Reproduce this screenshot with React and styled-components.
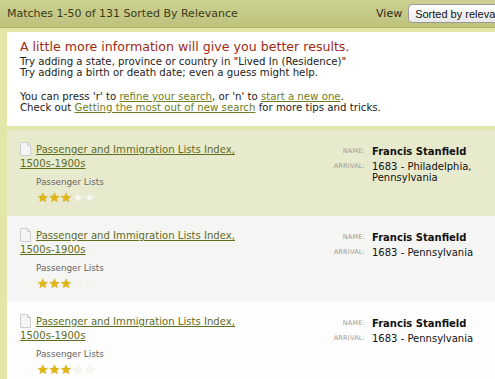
import styled, { createGlobalStyle } from "styled-components";

const GlobalStyle = createGlobalStyle`
  html, body { margin: 0; padding: 0; background: #fff; }
  body { font-family: "DejaVu Sans", Verdana, sans-serif; overflow: hidden; }
`;

const Page = styled.div`
  width: 495px;
  height: 379px;
  overflow: hidden;
  background: #e2e7a8;
`;

const Header = styled.div`
  height: 28px;
  display: flex;
  align-items: center;
  justify-content: space-between;
  padding-left: 7px;
  background: linear-gradient(#cdd192, #bec27c);
  border-bottom: 1px solid #aeb36a;
  box-sizing: border-box;
`;

const HeaderTitle = styled.div`
  font-size: 11px;
  color: #3a3a20;
  white-space: nowrap;
`;

const ViewBox = styled.div`
  display: flex;
  align-items: center;
  gap: 6px;
  font-size: 11px;
  color: #2a2a1a;
  margin-right: -25px;
`;

const SelectButton = styled.div`
  height: 17px;
  padding: 0 6px;
  display: flex;
  align-items: center;
  border: 1px solid #9a9a9a;
  border-radius: 4px;
  background: linear-gradient(#ffffff, #e8e8e8);
  font-family: "Liberation Sans", Arial, sans-serif;
  font-size: 11px;
  color: #111;
  white-space: nowrap;
`;

const Body = styled.div`
  padding: 4px 0 0 7px;
`;

const InfoBox = styled.div`
  background: #fff;
  padding: 7px 0 13px 13px;
  margin-bottom: 4px;
`;

const InfoTitle = styled.div`
  font-size: 12.6px;
  line-height: 15px;
  color: #9c2c14;
  margin-bottom: 2px;
`;

const InfoLine = styled.div`
  font-size: 10.2px;
  line-height: 11px;
  color: #222;
  white-space: nowrap;
  margin-top: ${(p) => (p.gap ? "13px" : "0")};
`;

const InfoLink = styled.a`
  color: #6e7d22;
  text-decoration: underline;
`;

const Row = styled.div`
  display: flex;
  justify-content: space-between;
  height: ${(p) => p.h}px;
  padding: 12px 13px 0 13px;
  box-sizing: border-box;
  background: ${(p) => p.bg};
`;

const Left = styled.div`
  width: 230px;
`;

const TitleBlock = styled.div`
  font-size: 10.1px;
  line-height: 14px;
`;

const TitleLink = styled.a`
  color: #5f6d1d;
  text-decoration: underline;
`;

const DocIcon = styled.svg`
  vertical-align: -3px;
  margin-right: 5px;
`;

const Category = styled.div`
  font-size: 8.8px;
  line-height: 11px;
  color: #666;
  margin: 6px 0 3px 16px;
`;

const Stars = styled.div`
  display: flex;
  margin-left: 17px;
  font-size: 13px;
  line-height: 13px;
`;

const Star = styled.span`
  color: ${(p) => (p.on ? "#e0b514" : "#f7f7f2")};
  text-shadow: ${(p) => (p.on ? "0 0 1px #c79a00" : "0 0 1px #e0e0d8")};
`;

const Right = styled.div`
  display: grid;
  grid-template-columns: auto 110px;
  column-gap: 7px;
  align-content: start;
  row-gap: 4px;
  padding-top: 4px;
`;

const Label = styled.div`
  font-size: 6.5px;
  line-height: 11px;
  color: #9a9a9a;
  text-align: right;
  letter-spacing: 0.2px;
`;

const Value = styled.div`
  font-size: 10px;
  line-height: 11px;
  color: #111;
  white-space: nowrap;
  font-weight: ${(p) => (p.bold ? 700 : 400)};
`;

const Doc = () => (
  <DocIcon width="11" height="14" viewBox="0 0 11 14">
    <path d="M0.5 0.5 H7.5 L10.5 3.5 V13.5 H0.5 Z" fill="#f4f4f4" stroke="#cfcfcf" />
    <path d="M7.5 0.5 V3.5 H10.5" fill="#e4e4e4" stroke="#cfcfcf" />
  </DocIcon>
);

const results = [
  { bg: "#e8eace", h: 86, arrival: ["1683 - Philadelphia,", "Pennsylvania"] },
  { bg: "#f5f5f3", h: 86, arrival: ["1683 - Pennsylvania"] },
  { bg: "#fdfdfd", h: 90, arrival: ["1683 - Pennsylvania"] },
];

const App = () => (
  <Page>
    <GlobalStyle />
    <Header>
      <HeaderTitle>Matches 1-50 of 131 Sorted By Relevance</HeaderTitle>
      <ViewBox>
        View
        <SelectButton>Sorted by relevance</SelectButton>
      </ViewBox>
    </Header>
    <Body>
      <InfoBox>
        <InfoTitle>A little more information will give you better results.</InfoTitle>
        <InfoLine>Try adding a state, province or country in "Lived In (Residence)"</InfoLine>
        <InfoLine>Try adding a birth or death date; even a guess might help.</InfoLine>
        <InfoLine gap>
          You can press 'r' to <InfoLink>refine your search</InfoLink>, or 'n' to{" "}
          <InfoLink>start a new one</InfoLink>.
        </InfoLine>
        <InfoLine>
          Check out <InfoLink>Getting the most out of new search</InfoLink> for more tips and tricks.
        </InfoLine>
      </InfoBox>
      {results.map((r, i) => (
        <Row key={i} bg={r.bg} h={r.h}>
          <Left>
            <TitleBlock>
              <Doc />
              <TitleLink>Passenger and Immigration Lists Index, 1500s-1900s</TitleLink>
            </TitleBlock>
            <Category>Passenger Lists</Category>
            <Stars>
              {[1, 2, 3, 4, 5].map((s) => (
                <Star key={s} on={s <= 3}>★</Star>
              ))}
            </Stars>
          </Left>
          <Right>
            <Label>NAME:</Label>
            <Value bold>Francis Stanfield</Value>
            <Label>ARRIVAL:</Label>
            <Value>
              {r.arrival.map((a) => (
                <div key={a}>{a}</div>
              ))}
            </Value>
          </Right>
        </Row>
      ))}
    </Body>
  </Page>
);

export default App;
